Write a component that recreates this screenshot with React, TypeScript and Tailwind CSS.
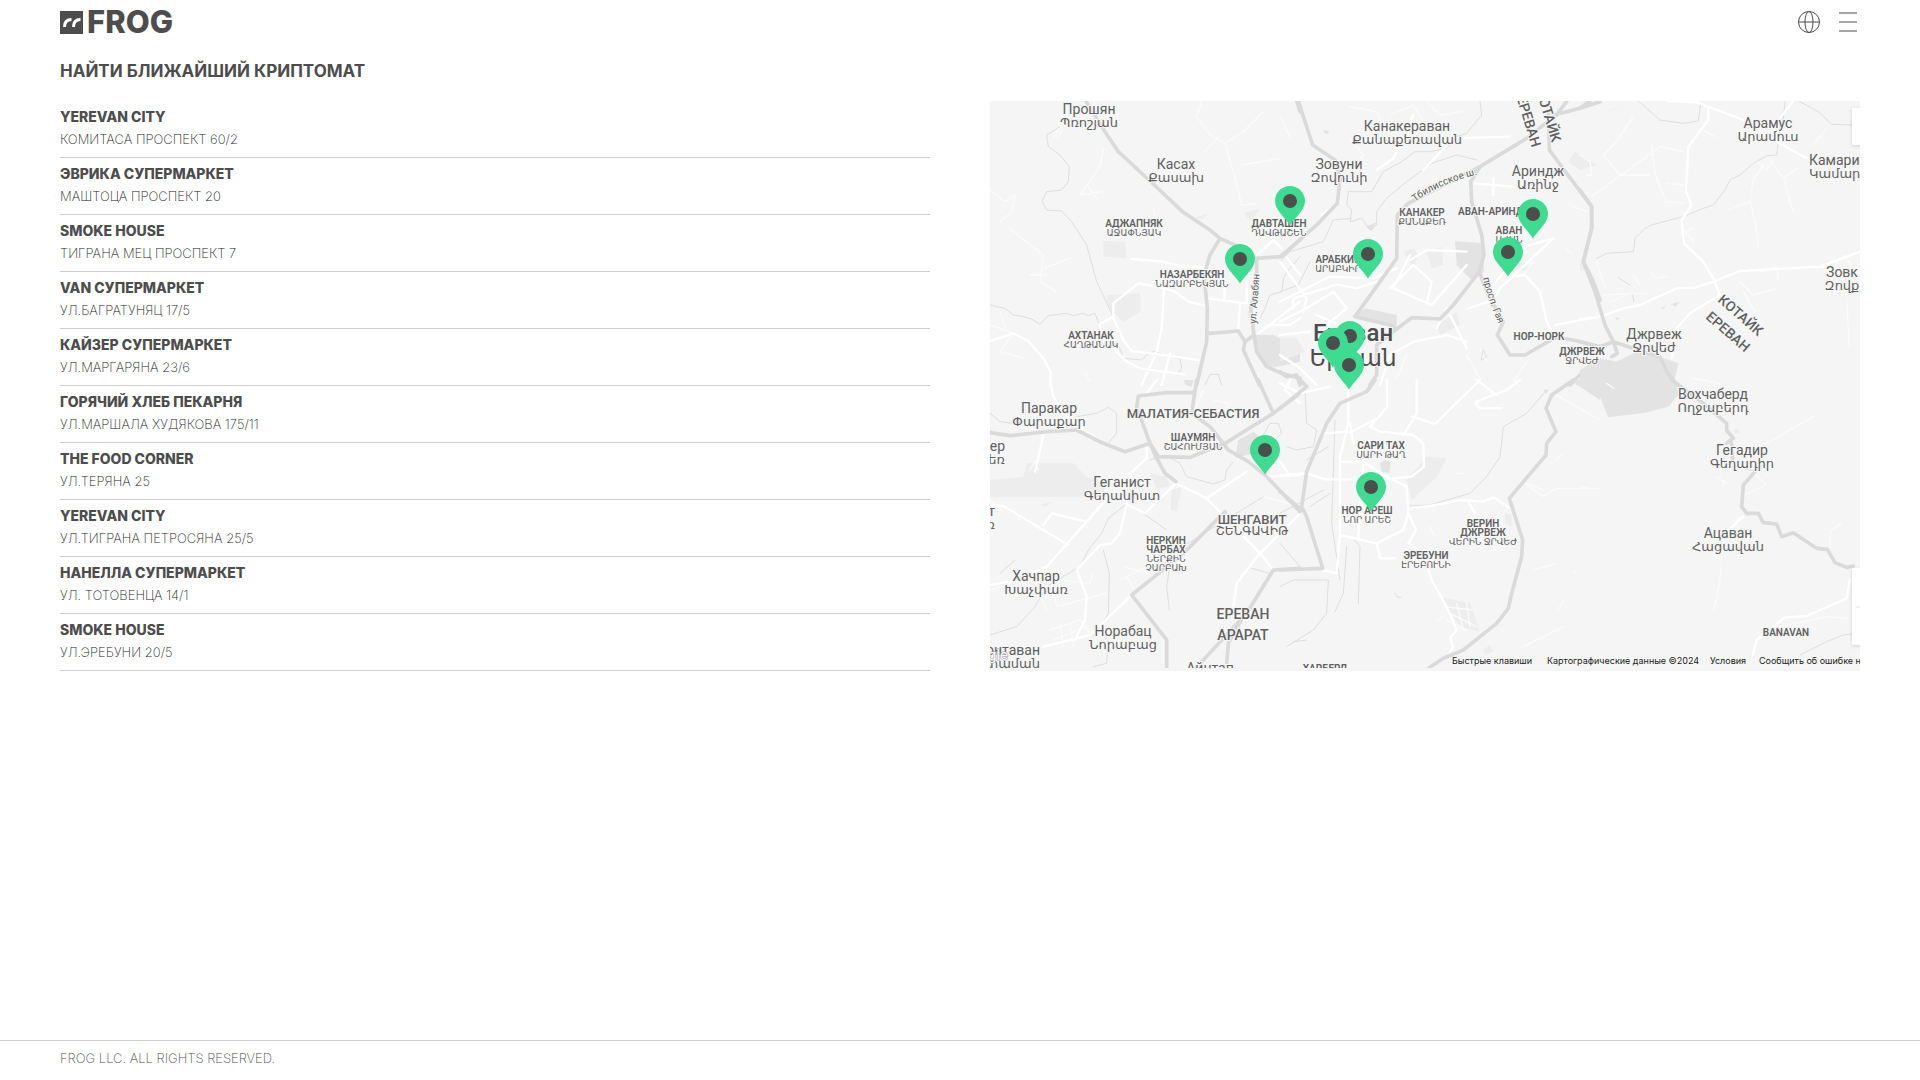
import { clsx } from "clsx"

const locations = [
    { name: "YEREVAN CITY", address: "КОМИТАСА ПРОСПЕКТ 60/2" },
    { name: "ЭВРИКА СУПЕРМАРКЕТ", address: "МАШТОЦА ПРОСПЕКТ 20" },
    { name: "SMOKE HOUSE", address: "ТИГРАНА МЕЦ ПРОСПЕКТ 7" },
    { name: "VAN СУПЕРМАРКЕТ", address: "УЛ.БАГРАТУНЯЦ 17/5" },
    { name: "КАЙЗЕР СУПЕРМАРКЕТ", address: "УЛ.МАРГАРЯНА 23/6" },
    { name: "ГОРЯЧИЙ ХЛЕБ ПЕКАРНЯ", address: "УЛ.МАРШАЛА ХУДЯКОВА 175/11" },
    { name: "THE FOOD CORNER", address: "УЛ.ТЕРЯНА 25" },
    { name: "YEREVAN CITY", address: "УЛ.ТИГРАНА ПЕТРОСЯНА 25/5" },
    { name: "НАНЕЛЛА СУПЕРМАРКЕТ", address: "УЛ. ТОТОВЕНЦА 14/1" },
    { name: "SMOKE HOUSE", address: "УЛ.ЭРЕБУНИ 20/5" },
]

// map tiles, drawn at 3x and scaled down
const tiles = [
    {
        x: -10,
        y: -6,
        parks: "M370 437L435 440L440 490L370 485Z M380 600L480 595L482 650L430 680L385 640Z M790 355L840 340L815 380Z M640 370L685 355L670 372Z",
        dark: "M825 720L880 720L960 760L960 800L870 820L835 790Z",
        faint: "M240 95L220 130M245 105L230 135M370 165L360 215L300 300L370 290M320 270L350 310M665 18L650 65L690 120L735 145L790 110L850 50M735 145L760 230L785 330L830 325M785 210L900 190M675 170L715 125M30 285L75 320L105 300L95 350L60 380M90 400L150 450L190 480L180 560L230 590M190 520L270 490M150 540L200 540M30 690L100 715M60 650L75 700M520 340L530 380L510 375M315 830L330 860M100 715L60 770L130 790",
        minor: "M240 95L200 120L205 155L240 180L268 215L265 260L245 285L200 290L186 320L200 345L245 348L275 380L320 450L350 560L400 665M30 630L75 640L100 660L130 665L155 672L180 688L205 662L260 655L280 662L310 655L325 662L345 655L358 690L380 730L420 760L430 790L485 795L500 780L525 768L560 785L600 790L605 820L590 840M960 485L930 520L912 545L905 590L870 600L855 640L840 670M675 870L690 838L715 838L725 870",
        street: "M30 738L100 715L145 738L190 790L212 830L210 870M455 492L550 500L610 516L670 516M475 565L400 625L400 670L430 735L455 768L490 772L655 795M475 565L555 580L585 590L625 620L672 632M552 580L545 700L530 770L485 870M358 688L400 665M358 690L375 735L440 800L480 820L612 838M685 610L800 625M780 625L775 700M735 560L733 610M800 560L800 625M820 490L880 435L905 460M915 480L960 540M835 715L960 620M870 690L930 690L960 670M570 775L545 870",
        major: "M318 18L375 110L415 170L510 258L610 352L690 405L720 430L775 455L825 490L905 485L960 435M720 430L690 480L672 540L682 640L680 740L650 870M830 490L830 560L812 640L822 720L795 740L775 708L680 716M795 740L790 765L838 870M822 720L830 770L860 815L905 835L960 850M945 0L960 50",
    },
    {
        x: 290,
        y: -6,
        parks: "M370 470L400 460L415 480L400 520Z M440 470L485 455L490 510L455 520Z M865 200L885 170L950 210L900 225Z M0 730L50 730L75 770L0 800Z M690 510L750 500L740 530Z M470 690L530 650L540 690L480 720Z",
        dark: "M525 438L608 445L612 530L575 555L530 510Z M225 665L255 640L350 660L350 700Z M885 870L960 815L960 870Z M258 395L292 380L275 408Z M132 105L148 108L142 118L132 114Z",
        faint: "M210 35L290 50L310 100M330 60L400 30L430 80L400 130M440 20L480 60L550 50M210 230L250 180L210 130M0 60L30 130M870 330L920 350M860 460L875 475M720 520L760 500L730 540M700 490L740 470M380 780L350 850M560 780L600 850M600 760L620 800M740 800L700 860M130 800L200 860",
        minor: "M600 18L605 60L560 115L530 125L500 160L450 170L405 170L365 200L310 230L275 290L205 290L200 330L215 345L210 380L245 370L270 405L290 390L290 350L320 310L380 260L455 205L530 180L590 195M215 370L160 375L130 440L30 470L0 500M0 590L55 570L90 500M610 765L620 785L605 795Z",
        street: "M0 620L150 545L280 550L350 520M40 640L40 610L170 568L230 580L290 560M0 680L80 640L160 590L200 640L140 690M390 495L440 465L560 470M390 480L340 580L455 630L560 510M330 580L400 510L455 560L440 625M585 265L700 275M690 545L735 540L780 590L800 680L825 728M565 640L640 615L660 580L820 430L735 455L640 570M825 690L960 665M0 500L80 610L70 650M0 720L90 710M300 870L330 780L400 740L500 720L560 740M470 700L500 640M510 660L560 760M180 320L125 360M290 225L340 190L400 60M430 225L520 130L690 125M640 250L640 300M110 660L200 700M0 780L60 820L110 870",
        major: "M50 0L55 18L98 150L165 195L180 250L172 325L110 390L25 465L0 485M960 20L900 40L830 58L740 130L600 215L530 250L385 325L352 360L350 490L300 560L225 665L330 690L350 702M600 215L572 260L575 320L605 420L612 480L598 530L520 630L480 672L395 668L350 702L290 750L290 840L270 870M598 530L625 600L670 680L652 720L690 780L735 780L825 728L880 735L960 755M805 50L808 165L860 235L935 335L935 400L910 500L940 560L960 615M960 810L910 830L870 870M0 830L20 845L50 840L60 870M830 58L860 20",
    },
    {
        x: 590,
        y: -6,
        parks: "M85 50L130 25L100 45Z M0 190L25 210L0 208Z M0 500L15 520L0 530Z",
        dark: "M0 825L60 790L110 800L180 765L240 785L295 805L280 870L0 870Z M240 640L258 632L250 642Z M272 628L300 620L285 635Z M105 668L122 668L112 676Z",
        faint: "M35 305L240 155L310 170M160 65L110 140L70 180L120 240L210 240M215 150L225 240L260 320L315 325M260 265L310 270M360 100L405 125M445 345L510 320L520 255L550 210M510 320L525 380L535 455M565 190L610 250L640 350L625 310M610 250L650 220M530 200L560 225L580 195M70 600L200 595M160 540L180 570M215 530L225 550L260 545M90 620L140 600M480 560L520 600L590 580M590 515L595 560M490 590L525 650M545 530L590 515M50 500L75 580M700 150L740 100M340 400L315 410L340 440M800 600L808 760M340 850L420 865M20 240L35 240L30 200L0 180M740 510L790 540M760 490L800 540M790 480L830 530",
        minor: "M175 18L240 75L310 85L355 78L362 25M615 20L610 70L600 100L590 180L560 182L520 205L480 240L450 255L435 285L400 330L370 340L310 365L270 375L215 390L195 400L165 430L160 470L80 475L50 490M660 20L715 50L755 88L815 90M115 548L150 570M158 600L162 620",
        street: "M260 18L350 22L490 75M385 40L385 75L325 155L318 290L335 330L305 375L312 445L370 500L400 550L420 600M0 672L60 665L130 640L180 630L290 580L345 578L400 560L480 528L720 515L840 470M590 140L680 190M640 18L600 70M420 600L330 655L290 700L275 790M720 515L840 530",
        major: "M0 285L35 335L35 400L10 500L45 590L75 690L100 740L112 775L95 785M0 740L60 755L100 740L190 770L240 785L260 830L290 870M0 40L30 18",
    },
    {
        x: -10,
        y: 279,
        parks: "M30 300L130 290L140 250L280 250L320 290L375 310L370 350L30 350Z M575 330L605 320L590 395L572 390Z M510 280L560 290L570 320L530 325Z M180 375L215 365L200 380Z",
        dark: "M612 0L640 0L635 20L615 15Z M765 235L775 180L820 155L850 180L820 220Z",
        faint: "M150 270L165 245L175 270M200 560L230 680L380 640M140 590L330 610L340 580M160 600L200 690M210 750L300 720L330 760M220 780L320 740M240 730L250 800M270 730L280 800M420 600L520 550M430 560L500 580M440 590L470 640M30 630L100 610M850 350L960 380M30 360L70 395M100 385L120 420M700 60L745 70L730 130M670 30L640 100",
        minor: "M440 372L385 415L365 460L325 510L300 560L200 620L165 680L110 740L30 765M30 100L60 125L100 130M290 110L350 100L385 82L410 100L410 160L385 190M510 240L555 225L600 250L620 290L700 312L735 300L740 270L760 245M370 510L388 580L385 700L340 770M568 690L560 620L575 520L850 350M850 165L870 130L895 130L905 160L885 180M385 780L380 850L340 860M60 580L105 540M475 390L560 450M815 565L870 580",
        street: "M210 0L220 50L260 110L370 190M500 200L500 235L440 290L200 560L110 600L30 615M588 310L495 400L440 372L420 460L395 490L360 495L290 570L320 650L315 720L285 780M588 310L680 355L840 520L960 400M680 355L800 275M840 520L880 570M840 520L770 610L760 680M30 375L70 378L265 495M190 435L215 400L320 425M165 275L190 165M860 290L960 285M890 230L925 280M190 800L330 765L450 650M530 0L500 40M930 0L915 30L960 70",
        major: "M30 158L90 167L200 155L290 150L370 190L435 215L510 190L535 230L630 232L735 190L880 100L960 40M650 0L635 100L690 140L745 210L805 245L860 290L960 395M640 38L560 38L475 48L470 80L510 190L525 225L555 280L588 305M835 0L880 100M735 395L610 520L455 645L560 780L560 880M960 565L880 570L800 700L665 845L640 870M740 850L745 790L800 690",
    },
    {
        x: 290,
        y: 279,
        parks: "M380 300L440 230L500 235L470 290L395 360Z M480 650L570 670L600 755L540 740Z M675 400L695 405L695 440L675 430Z M610 810L630 795L640 815L615 825Z",
        dark: "M300 250L315 240L332 245L328 280L305 275Z M885 10L960 60L960 0L880 0Z M790 30L805 28L800 42Z",
        faint: "M720 300L790 350L830 325L960 325M740 310L790 330M490 680L580 690M510 700L590 740M530 670L550 750M560 670L570 740M500 720L560 750M450 440L465 470M470 720L490 710M525 280L555 280M835 690L850 660M880 580L888 568M820 40L960 120M700 0L720 20M830 240L850 220M760 570L830 550M730 800L850 740",
        minor: "M800 30L740 100L670 140L660 230L620 290L570 340L450 375L385 378M75 30L80 130L110 150L100 200L50 210L20 200M80 240L145 200M165 120L155 430L180 600M0 400L130 330M0 620L40 600L145 600L140 700L100 750L20 800M220 475L240 500L235 670M200 500L190 640L165 695M345 640Q350 655 362 652M0 490L60 560M80 780L40 785M150 340L90 380",
        street: "M205 0L205 130L180 230L180 460L170 580L128 570M180 465L290 490L370 450L385 400L380 320L310 285L250 245L180 245M320 0L322 80L270 140L300 155L400 165L430 190L432 260L395 290L310 298L135 298L80 280L0 285M370 165L410 100L410 0M395 110L465 132L600 0M585 70L600 60L680 30L720 0M585 70L600 85L665 85M210 130L220 190M130 160L215 155L300 110M385 385L450 378L545 360L610 365L640 352L690 385M565 365L585 400M290 490L300 535L345 535M385 400L408 450L385 490L430 520L455 600L500 680L530 750L510 775L520 800L510 815M235 470L250 245M590 0L650 45M0 10L60 40L150 20",
        major: "M285 0L260 35L180 70L140 130L80 275L65 380L80 410L128 565L0 570M0 335L65 390M0 85L80 20L60 0M880 0L815 45L798 85L828 155L800 190L798 225L688 355L728 480L725 530L695 640L685 685L650 730L550 810L490 835L445 865",
    },
    {
        x: 590,
        y: 279,
        parks: "M460 150L475 145L478 158L465 162Z",
        dark: "M0 0L20 20L60 50L85 112L195 98L265 80L298 40L280 0Z",
        faint: "M80 10L100 25M410 290L440 310M420 270L430 315M525 280L558 315L495 345M425 530L420 600L400 695M380 500L420 540M750 495L750 455L785 430M600 740L740 710L800 715M690 735L710 750M30 325L0 320M560 190L700 110",
        minor: "M660 825L740 785L790 765L815 762M495 268L525 272",
        street: "M810 600L800 655L720 690L680 708L615 712L530 780L518 825M490 410L450 445M478 415L460 440",
        major: "M275 0L370 70L440 130L440 150L460 175L440 190M455 190L458 240M525 275L490 315L485 380L500 400L535 400L550 428L590 432L605 470L640 458L710 505L742 508L765 548L800 562L820 558",
    },
]

type Label = { x: number; y: number; lines: string[]; anchor?: "start" | "end" }

const towns: Label[] = [
    { x: 99, y: 13, lines: ["Прошян", "Պռոշյան"] },
    { x: 186, y: 68, lines: ["Касах", "Քասախ"] },
    { x: 417, y: 30, lines: ["Канакераван", "Քանաքեռավան"] },
    { x: 349, y: 68, lines: ["Зовуни", "Զովունի"] },
    { x: 548, y: 75, lines: ["Ариндж", "Առինջ"] },
    { x: 778, y: 27, lines: ["Арамус", "Արամուս"] },
    { x: 819, y: 64, lines: ["Камарис", "Կամարիս"], anchor: "start" },
    { x: 852, y: 176, lines: ["Зовк", "Զովք"] },
    { x: 664, y: 238, lines: ["Джрвеж", "Ջրվեժ"] },
    { x: 723, y: 298, lines: ["Вохчаберд", "Ողջաբերդ"] },
    { x: 752, y: 354, lines: ["Гегадир", "Գեղադիր"] },
    { x: 738, y: 437, lines: ["Ацаван", "Հացավան"] },
    { x: 59, y: 312, lines: ["Паракар", "Փարաքար"] },
    { x: 132, y: 386, lines: ["Геганист", "Գեղանիստ"] },
    { x: 46, y: 480, lines: ["Хачпар", "Խաչփառ"] },
    { x: 133, y: 535, lines: ["Норабац", "Նորաբաց"] },
    { x: 15, y: 350, lines: ["ер", "ղեռ"], anchor: "end" },
    { x: 5, y: 415, lines: ["т", "ւռ"], anchor: "end" },
    { x: 50, y: 554, lines: ["онтаван", "շտաման"], anchor: "end" },
    { x: 220, y: 572, lines: ["Айнтап"] },
]

const districts: Label[] = [
    { x: 144, y: 126, lines: ["АДЖАПНЯК", "ԱՋԱՓՆՅԱԿ"] },
    { x: 289, y: 126, lines: ["ДАВТАШЕН", "ԴԱՎԹԱՇԵՆ"] },
    { x: 202, y: 177, lines: ["НАЗАРБЕКЯН", "ՆԱԶԱՐԲԵԿՅԱՆ"] },
    { x: 101, y: 238, lines: ["АХТАНАК", "ՀԱՂԹԱՆԱԿ"] },
    { x: 432, y: 115, lines: ["КАНАКЕР", "ՔԱՆԱՔԵՌ"] },
    { x: 468, y: 114, lines: ["АВАН-АРИНДЖ"], anchor: "start" },
    { x: 519, y: 133, lines: ["АВАН", "ԱՎԱՆ"] },
    { x: 348, y: 162, lines: ["АРАБКИР", "ԱՐԱԲԿԻՐ"] },
    { x: 549, y: 239, lines: ["НОР-НОРК"] },
    { x: 592, y: 254, lines: ["ДЖРВЕЖ", "ՋՐՎԵԺ"] },
    { x: 203, y: 340, lines: ["ШАУМЯН", "ՇԱՀՈՒՄՅԱՆ"] },
    { x: 391, y: 348, lines: ["САРИ ТАХ", "ՍԱՐԻ ԹԱՂ"] },
    { x: 377, y: 413, lines: ["НОР АРЕШ", "ՆՈՐ ԱՐԵՇ"] },
    { x: 436, y: 458, lines: ["ЭРЕБУНИ", "ԷՐԵԲՈՒՆԻ"] },
    { x: 493, y: 426, lines: ["ВЕРИН", "ДЖРВЕЖ", "ՎԵՐԻՆ ՋՐՎԵԺ"] },
    { x: 176, y: 443, lines: ["НЕРКИН", "ЧАРБАХ", "ՆԵՐՔԻՆ", "ՉԱՐԲԱԽ"] },
    { x: 796, y: 535, lines: ["BANAVAN"] },
    { x: 335, y: 571, lines: ["ХАРБЕРД"] },
]

const pins = [
    [300, 100],
    [250, 158],
    [378, 153],
    [543, 113],
    [518, 151],
    [360, 235],
    [343, 242],
    [359, 264],
    [275, 349],
    [381, 386],
]

const isArmenian = (text: string) => /[\u0530-\u058F]/.test(text)

const MapLabel = ({ label, step, small }: { label: Label; step: number; small?: boolean }) => (
    <>
        {label.lines.map((line, i) => (
            <text
                key={line}
                x={label.x}
                y={label.y + i * step}
                textAnchor={label.anchor ?? "middle"}
                className={clsx(
                    small && !isArmenian(line) && "text-[10px] font-semibold",
                    small && isArmenian(line) && "text-[9px]",
                    !small && !isArmenian(line) && "text-[14px]",
                    !small && isArmenian(line) && "text-[13px]",
                )}
            >
                {line}
            </text>
        ))}
    </>
)

const AtmMap = () => (
    <svg
        viewBox="0 0 870 570"
        className="block w-full bg-[#f5f5f5] font-['Roboto','DejaVu_Sans',sans-serif]"
        role="img"
        aria-label="Карта криптоматов"
    >
        {tiles.map((tile) => (
            <g
                key={`${tile.x}${tile.y}`}
                transform={`translate(${tile.x} ${tile.y}) scale(0.33333)`}
                fill="none"
                strokeLinejoin="round"
                strokeLinecap="round"
            >
                <path d={tile.parks} fill="#ededed" />
                <path d={tile.dark} fill="#e3e3e3" />
                <path d={tile.faint} stroke="#fbfbfb" strokeWidth={4} />
                <path d={tile.minor} stroke="#dedede" strokeWidth={3} />
                <path d={tile.street} stroke="#ffffff" strokeWidth={7} />
                <path d={tile.major} stroke="#dadada" strokeWidth={11} />
            </g>
        ))}

        <g fill="#616161" stroke="#f5f5f5" strokeWidth={2} paintOrder="stroke">
            {towns.map((label) => (
                <MapLabel key={label.lines[0]} label={label} step={13} />
            ))}
            {districts.map((label) => (
                <MapLabel key={`${label.x}${label.lines[0]}`} label={label} step={9} small />
            ))}
            <g textAnchor="middle" className="text-[13px] font-medium">
                <text x="203" y="317">МАЛАТИЯ-СЕБАСТИЯ</text>
                <text x="262" y="423">ШЕНГАВИТ</text>
                <text x="262" y="434" className="text-[12px] font-normal">ՇԵՆԳԱՎԻԹ</text>
            </g>
            <g className="text-[14px] font-medium">
                <text x="253" y="518" textAnchor="middle">ЕРЕВАН</text>
                <text x="253" y="539" textAnchor="middle">АРАРАТ</text>
                <text transform="translate(542 47) rotate(73)" textAnchor="end">ЕРЕВАН</text>
                <text transform="translate(562 42) rotate(73)" textAnchor="end">КОТАЙК</text>
                <text transform="translate(727 200) rotate(41)">КОТАЙК</text>
                <text transform="translate(715 217) rotate(41)">ЕРЕВАН</text>
            </g>
            <g className="text-[10px]">
                <path id="tbilisi" d="M425 101Q450 82 490 73" fill="none" stroke="none" />
                <path id="gai" d="M493 177Q498 200 512 230" fill="none" stroke="none" />
                <text><textPath href="#tbilisi">Тбилисское ш.</textPath></text>
                <text><textPath href="#gai">просп. Гая</textPath></text>
                <text transform="translate(266 223) rotate(-86)">ул. Алабян</text>
            </g>
            <g textAnchor="middle" fill="#4d4d4d">
                <text x="363" y="240" className="text-[24px] font-medium">Ереван</text>
                <text x="363" y="265" className="text-[23px]">Երևան</text>
            </g>
            <text x="-2" y="559" stroke="#999999" fill="#ffffff" strokeWidth={1} className="text-[15px]">gle</text>
        </g>

        <g fill="#ffffff" className="drop-shadow">
            <rect x="862" y="7" width="20" height="37" rx="1" />
            <rect x="862" y="467" width="20" height="77" rx="1" />
        </g>
        <path d="M866 506H870" stroke="#e6e6e6" />
        <path d="M0 567H870V570H0Z" fill="#f5f5f5" />

        <g fill="#222222" className="font-['Inter',sans-serif] text-[9px]">
            <text x="462" y="563">Быстрые клавиши</text>
            <text x="557" y="563">Картографические данные ©2024</text>
            <text x="720" y="563">Условия</text>
            <text x="769" y="563">Сообщить об ошибке на карте</text>
        </g>

        {pins.map(([x, y]) => (
            <g key={`${x}-${y}`} transform={`translate(${x} ${y})`}>
                <path d="M0 -15C-8 -15 -15 -8.500 -15 0C-15 9 -6 15 0 24.500C6 15 15 9 15 0C15 -8.500 8 -15 0 -15Z" fill="#3ddc91" />
                <circle r="7" fill="#4d4d4d" />
            </g>
        ))}
    </svg>
)

const Header = () => (
    <header className="flex h-11 items-center justify-between px-[60px]">
        <a href="/" className="flex items-center gap-1">
            <svg width="23" height="23" viewBox="0 0 23 23" aria-hidden="true">
                <path d="M0 0H23V23H0Z" fill="#4d4d4d" />
                <path
                    d="M4.500 16C4.500 11 7 8.500 11.500 8.500M13.500 16C13.500 11 16 8.500 20.500 8.500"
                    fill="none"
                    stroke="#ffffff"
                    strokeWidth="3"
                />
            </svg>
            <span className="font-['Inter',sans-serif] text-[31px] leading-8 font-extrabold">FROG</span>
        </a>
        <nav className="flex items-center gap-4">
            <button type="button" aria-label="Язык">
                <svg width="22" height="22" viewBox="0 0 22 22" fill="none" stroke="#4d4d4d">
                    <circle cx="11" cy="11" r="10.500" />
                    <ellipse cx="11" cy="11" rx="4" ry="10.500" />
                    <path d="M0.500 11H21.500" />
                </svg>
            </button>
            <button type="button" aria-label="Меню" className="flex flex-col gap-[7px] px-[3px]">
                <span className="h-[2px] w-[18px] bg-[#a6a6a6]" />
                <span className="h-[2px] w-[18px] bg-[#a6a6a6]" />
                <span className="h-[2px] w-[18px] bg-[#a6a6a6]" />
            </button>
        </nav>
    </header>
)

export default function App() {
    return (
        <div className="flex min-h-screen flex-col bg-white font-['Inter',sans-serif] text-[#4d4d4d]">
            <Header />
            <main className="flex-1 px-[60px] pt-[15px]">
                <h1 className="text-[17px] leading-6 font-bold">НАЙТИ БЛИЖАЙШИЙ КРИПТОМАТ</h1>
                <div className="mt-[18px] grid grid-cols-2 items-start gap-[60px]">
                    <ul>
                        {locations.map((item) => (
                            <li key={item.address} className="border-b border-[#cccccc] pt-1 pb-2">
                                <h2 className="text-[14px] leading-6 font-extrabold">{item.name}</h2>
                                <p className="text-[13px] leading-5 font-extralight text-[#262626]">{item.address}</p>
                            </li>
                        ))}
                    </ul>
                    <AtmMap />
                </div>
            </main>
            <footer className="border-t border-[#cccccc] px-[60px] pt-[7px] pb-3">
                <p className="text-[13px] leading-5 font-extralight text-[#4d4d4d]">FROG LLC. ALL RIGHTS RESERVED.</p>
            </footer>
        </div>
    )
}
